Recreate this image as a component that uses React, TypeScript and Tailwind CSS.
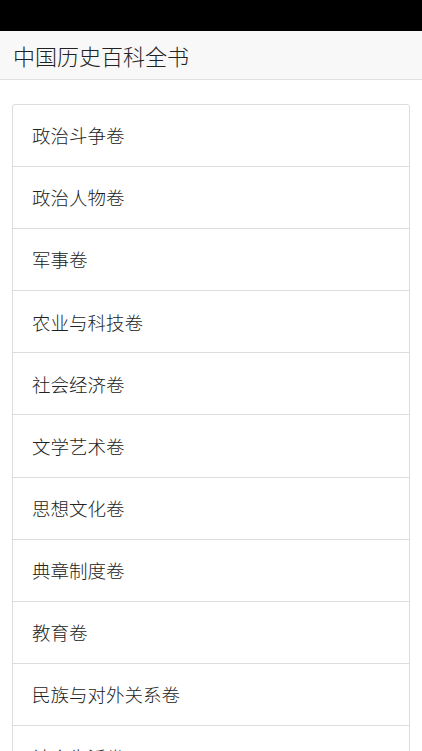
const volumes = [
  "政治斗争卷",
  "政治人物卷",
  "军事卷",
  "农业与科技卷",
  "社会经济卷",
  "文学艺术卷",
  "思想文化卷",
  "典章制度卷",
  "教育卷",
  "民族与对外关系卷",
  "社会生活卷",
];

export default function App() {
  return (
    <div
      className="h-[751px] w-full overflow-hidden bg-white text-[#333]"
      style={{ fontFamily: '"Noto Sans CJK SC", "Noto Sans", sans-serif' }}
    >
      {/* status bar */}
      <div className="h-[31px] bg-black" />

      {/* header */}
      <div className="flex h-[49px] items-center border-b border-[#e0e0e0] bg-[#f8f8f8] px-[13px]">
        <h1 className="text-[22px] font-light leading-none text-[#222]">中国历史百科全书</h1>
      </div>

      {/* volume list */}
      <div className="mx-[12px] mt-[24px] rounded-[3px] border border-[#ddd]">
        {volumes.map((v) => (
          <div
            key={v}
            className="flex h-[62.1px] items-center border-b border-[#ddd] pl-[19px] text-[18.5px] font-light leading-none text-[#222] last:border-b-0"
          >
            {v}
          </div>
        ))}
      </div>
    </div>
  );
}
